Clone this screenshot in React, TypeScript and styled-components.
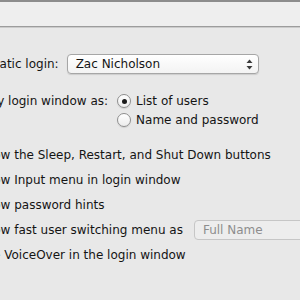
import React from "react";
import styled, { createGlobalStyle } from "styled-components";

const Global = createGlobalStyle`
  html, body { margin: 0; padding: 0; }
  body {
    width: 300px;
    height: 300px;
    overflow: hidden;
    background: #e8e8e8;
    font-family: "DejaVu Sans", "Liberation Sans", sans-serif;
    font-size: 12px;
    color: #141414;
  }
`;

const Page = styled.div`
  width: 300px;
  height: 300px;
  display: flex;
  flex-direction: column;
  background: #e8e8e8;
  overflow: hidden;
`;

const TopBar = styled.div`
  height: 24px;
  flex: none;
  background: #eeeeee;
  border-top: 2px solid #8c8c8c;
  border-bottom: 1px solid #9c9c9c;
  box-shadow: 0 1px 0 #cbcbcb;
`;

const Content = styled.div`
  margin-left: -40px;
  padding-top: 27px;
  display: flex;
  flex-direction: column;
  white-space: nowrap;
`;

const FieldRow = styled.div<{ $gap: number; $top?: number; $align?: string }>`
  display: flex;
  align-items: ${(p) => p.$align ?? "center"};
  gap: ${(p) => p.$gap}px;
  margin-top: ${(p) => p.$top ?? 0}px;
`;

const Label = styled.span`
  flex: none;
  line-height: 18px;
`;

const Popup = styled.div<{ $disabled?: boolean; $width: number; $offset?: number }>`
  box-sizing: border-box;
  flex: none;
  width: ${(p) => p.$width}px;
  height: 20px;
  margin-left: ${(p) => p.$offset ?? 0}px;
  display: flex;
  align-items: center;
  justify-content: space-between;
  padding: 0 5px 0 8px;
  border-radius: 4px;
  border: 1px solid ${(p) => (p.$disabled ? "#c6c6c6" : "#a6a6a6")};
  background: ${(p) =>
    p.$disabled ? "#ededed" : "linear-gradient(#ffffff, #f3f3f3)"};
  box-shadow: ${(p) => (p.$disabled ? "none" : "0 1px 1px rgba(0,0,0,0.12)")};
  color: ${(p) => (p.$disabled ? "#8d8d8d" : "#141414")};
`;

const RadioGroup = styled.div`
  display: flex;
  flex-direction: column;
  gap: 1px;
`;

const RadioRow = styled.label`
  display: flex;
  align-items: center;
  gap: 5px;
  height: 18px;
`;

const RadioCircle = styled.span<{ $on?: boolean }>`
  box-sizing: border-box;
  width: 14px;
  height: 14px;
  border-radius: 50%;
  border: 1px solid #8e8e8e;
  background: linear-gradient(#ffffff, #ececec);
  box-shadow: 0 1px 1px rgba(0,0,0,0.1);
  display: flex;
  align-items: center;
  justify-content: center;
  &::after {
    content: "";
    width: 5px;
    height: 5px;
    border-radius: 50%;
    background: ${(p) => (p.$on ? "#1a1a1a" : "transparent")};
  }
`;

const Checks = styled.div`
  margin-top: 13px;
  display: flex;
  flex-direction: column;
`;

const CheckRow = styled.div`
  height: 25px;
  display: flex;
  align-items: center;
  gap: 4px;
`;

const CheckText = styled.span`
  flex: none;
`;

const Box = styled.span`
  box-sizing: border-box;
  flex: none;
  width: 14px;
  height: 14px;
  border-radius: 2px;
  border: 1px solid #8e8e8e;
  background: linear-gradient(#ffffff, #ececec);
`;

const Arrows = () => (
  <svg width="7" height="11" viewBox="0 0 7 11">
    <path d="M3.5 0.5 L6.5 4 L0.5 4 Z" fill="#3a3a3a" />
    <path d="M3.5 10.5 L6.5 7 L0.5 7 Z" fill="#3a3a3a" />
  </svg>
);

export default function App() {
  return (
    <Page>
      <Global />
      <TopBar />
      <Content>
        <FieldRow $gap={8}>
          <Label>Automatic login:</Label>
          <Popup $width={192}>
            <span>Zac Nicholson</span>
            <Arrows />
          </Popup>
        </FieldRow>
        <FieldRow $gap={9} $top={18} $align="flex-start">
          <Label>Display login window as:</Label>
          <RadioGroup>
            <RadioRow>
              <RadioCircle $on />
              <span>List of users</span>
            </RadioRow>
            <RadioRow>
              <RadioCircle />
              <span>Name and password</span>
            </RadioRow>
          </RadioGroup>
        </FieldRow>
        <Checks>
          <CheckRow>
            <Box />
            <CheckText>Show the Sleep, Restart, and Shut Down buttons</CheckText>
          </CheckRow>
          <CheckRow>
            <Box />
            <CheckText>Show Input menu in login window</CheckText>
          </CheckRow>
          <CheckRow>
            <Box />
            <CheckText>Show password hints</CheckText>
          </CheckRow>
          <CheckRow>
            <Box />
            <CheckText>Show fast user switching menu as</CheckText>
            <Popup $disabled $width={160} $offset={7}>
              <span>Full Name</span>
            </Popup>
          </CheckRow>
          <CheckRow>
            <Box />
            <CheckText>Use VoiceOver in the login window</CheckText>
          </CheckRow>
        </Checks>
      </Content>
    </Page>
  );
}
